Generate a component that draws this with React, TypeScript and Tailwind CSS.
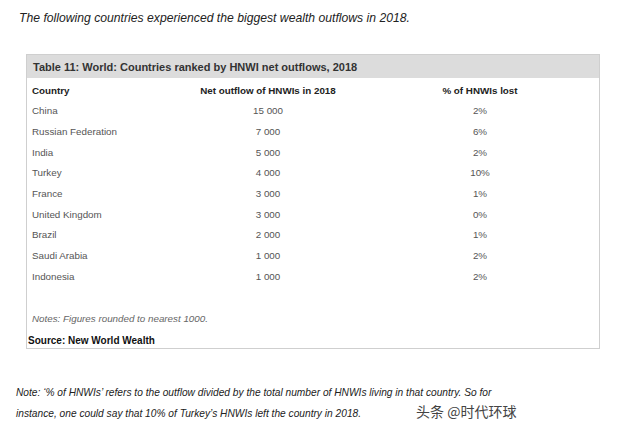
const rows = [
  { country: 'China', outflow: '15 000', lost: '2%' },
  { country: 'Russian Federation', outflow: '7 000', lost: '6%' },
  { country: 'India', outflow: '5 000', lost: '2%' },
  { country: 'Turkey', outflow: '4 000', lost: '10%' },
  { country: 'France', outflow: '3 000', lost: '1%' },
  { country: 'United Kingdom', outflow: '3 000', lost: '0%' },
  { country: 'Brazil', outflow: '2 000', lost: '1%' },
  { country: 'Saudi Arabia', outflow: '1 000', lost: '2%' },
  { country: 'Indonesia', outflow: '1 000', lost: '2%' },
]

export default function App() {
  return (
    <div className="h-[430px] w-[640px] bg-white font-['Liberation_Sans',Arial,sans-serif]">
      <p className="pl-[19px] pt-[9px] text-[12.2px] italic text-[#222]">
        The following countries experienced the biggest wealth outflows in 2018.
      </p>

      <div className="ml-[26px] mt-[27px] w-[574px] border border-[#cfcfcf]">
        <div className="flex h-[23px] items-center bg-[#dcdcdc] pl-[6px] text-[11px] font-bold text-[#333]">
          Table 11: World: Countries ranked by HNWI net outflows, 2018
        </div>

        <div className="pl-[5px] pt-[3px]">
          <div className="flex h-[20px] items-center whitespace-nowrap text-[9.8px] font-bold text-[#222]">
            <div className="w-[168px]">Country</div>
            <div className="w-[136px] text-center">Net outflow of HNWIs in 2018</div>
            <div className="ml-[76px] w-[136px] text-center">% of HNWIs lost</div>
          </div>
          {rows.map((row) => (
            <div
              key={row.country}
              className="flex h-[20.7px] items-center text-[9.8px] text-[#555]"
            >
              <div className="w-[168px]">{row.country}</div>
              <div className="w-[136px] text-center">{row.outflow}</div>
              <div className="ml-[76px] w-[136px] text-center">{row.lost}</div>
            </div>
          ))}
          <p className="pt-[25px] text-[9.8px] italic text-[#666]">
            Notes: Figures rounded to nearest 1000.
          </p>
        </div>
        <p className="pl-[1px] pt-[6px] text-[10px] font-bold text-[#111]">
          Source: New World Wealth
        </p>
      </div>

      <p className="ml-[16px] mt-[35px] w-[510px] text-[10.2px] italic leading-[18px] text-[#222]">
        Note: ‘% of HNWIs’ refers to the outflow divided by the total number of HNWIs living in that
        country. So for instance, one could say that 10% of Turkey’s HNWIs left the country in 2018.
        <span className="ml-[55px] inline-block whitespace-nowrap font-['Noto_Sans_CJK_SC',sans-serif] text-[14px] not-italic leading-[18px] text-[#444]">
          头条 @时代环球
        </span>
      </p>
    </div>
  )
}
